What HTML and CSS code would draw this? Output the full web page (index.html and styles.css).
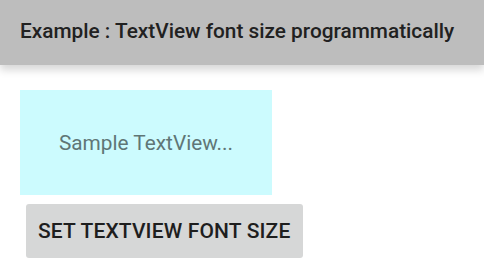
FILE: index.html
```html
<!DOCTYPE html>
<html lang="en">
<head>
    <meta charset="UTF-8">
    <title>TextView font size</title>
    <link rel="stylesheet" href="styles.css">
</head>
<body>
    <header class="toolbar">
        <h1>Example : TextView font size programmatically</h1>
    </header>
    <main class="content">
        <div class="sample-box">
            <p id="sample-text">Sample TextView...</p>
        </div>
        <button class="set-button">SET TEXTVIEW FONT SIZE</button>
    </main>
</body>
</html>
```
FILE: styles.css
```css
body {
    font-family: Roboto, "Liberation Sans", Arial, sans-serif;
    margin: 0;
    padding: 0;
    background-color: #ffffff;
    height: 100vh;
    overflow: hidden;
}
.toolbar {
    height: 65px;
    background-color: #bdbdbd;
    box-shadow: 0 5px 8px rgba(0,0,0,0.16);
    display: flex;
    align-items: center;
    padding: 0 20px;
    position: relative;
}
.toolbar h1 {
    margin: 0;
    font-size: 20.8px;
    font-weight: 500;
    color: #212121;
    padding-bottom: 4px;
    white-space: nowrap;
}
.content {
    padding: 25px 20px;
    display: flex;
    flex-direction: column;
    align-items: flex-start;
}
.sample-box {
    width: 252px;
    height: 105px;
    background-color: #ccfbfe;
    display: flex;
    align-items: center;
    justify-content: center;
}
.sample-box p {
    margin: 0;
    font-size: 20.8px;
    color: #5f7676;
}
.set-button {
    margin: 9px 0 0 6px;
    width: 277px;
    height: 54px;
    border: none;
    border-radius: 3px;
    background-color: #d6d7d7;
    font-family: Roboto, "Liberation Sans", Arial, sans-serif;
    font-size: 21px;
    font-weight: 500;
    letter-spacing: 0.15px;
    color: #1e1e1e;
    padding: 0 12px;
    text-align: left;
    white-space: nowrap;
}
```
